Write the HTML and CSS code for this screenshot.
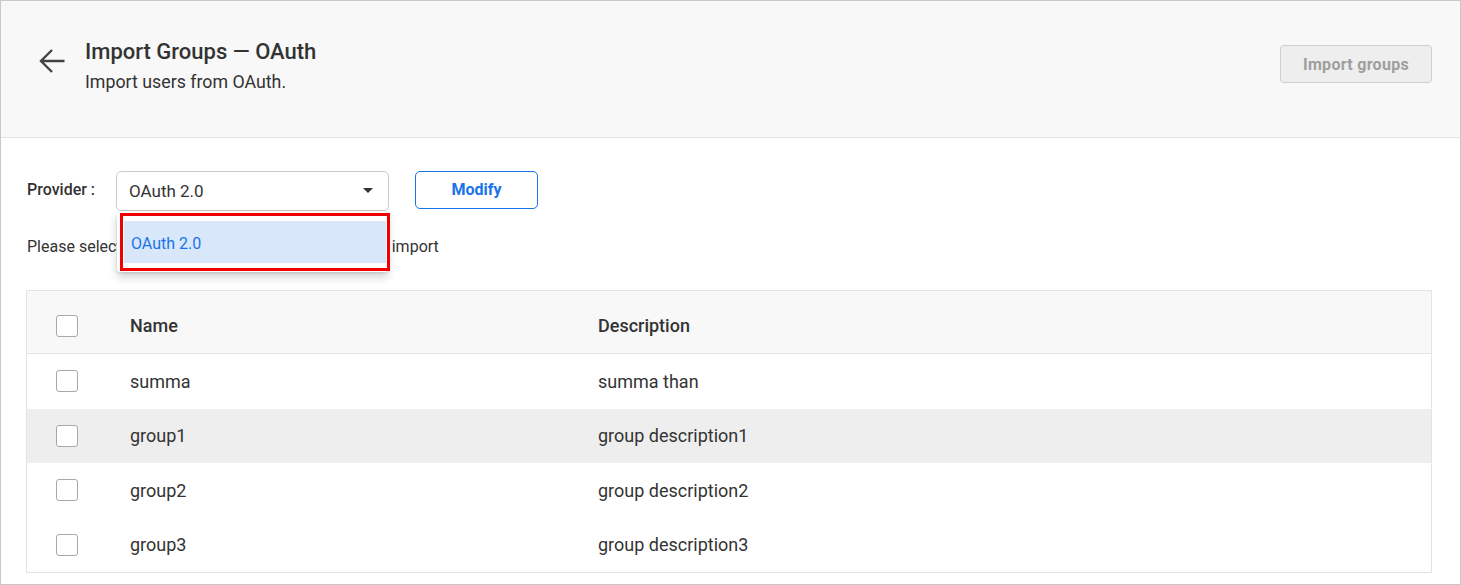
FILE: index.html
```html
<!DOCTYPE html>
<html>
<head>
<meta charset="utf-8">
<link rel="stylesheet" href="styles.css">
</head>
<body>
<div class="page">
  <header class="header">
    <div class="header-left">
      <button class="back" aria-label="Back">
        <svg width="27" height="26" viewBox="0 0 27 26"><path d="M1.5 13H25.5M13 2L2 13L13 24" fill="none" stroke="#444" stroke-width="2.4"/></svg>
      </button>
      <div class="titles">
        <h1 class="title">Import Groups — OAuth</h1>
        <p class="subtitle">Import users from OAuth.</p>
      </div>
    </div>
    <button class="btn-disabled">Import groups</button>
  </header>
  <main class="content">
    <div class="provider-row">
      <span class="provider-label">Provider :</span>
      <div class="select-wrap">
        <div class="select">
          <span>OAuth 2.0</span>
          <svg class="caret" width="10" height="5" viewBox="0 0 10 5"><path d="M0 0h10L5 5z" fill="#333"/></svg>
        </div>
        <div class="menu">
          <div class="menu-item">OAuth 2.0</div>
        </div>
        <div class="highlight"></div>
      </div>
      <button class="btn-outline">Modify</button>
    </div>
    <p class="hint">Please select the group from OAuth2.0 you want to import</p>
    <div class="table">
      <div class="tr th">
        <div class="c-check"><span class="cb"></span></div>
        <div class="c-name">Name</div>
        <div class="c-desc">Description</div>
      </div>
      <div class="tr">
        <div class="c-check"><span class="cb"></span></div>
        <div class="c-name">summa</div>
        <div class="c-desc">summa than</div>
      </div>
      <div class="tr hover">
        <div class="c-check"><span class="cb"></span></div>
        <div class="c-name">group1</div>
        <div class="c-desc">group description1</div>
      </div>
      <div class="tr">
        <div class="c-check"><span class="cb"></span></div>
        <div class="c-name">group2</div>
        <div class="c-desc">group description2</div>
      </div>
      <div class="tr">
        <div class="c-check"><span class="cb"></span></div>
        <div class="c-name">group3</div>
        <div class="c-desc">group description3</div>
      </div>
    </div>
  </main>
</div>
</body>
</html>
```
FILE: styles.css
```css
* { box-sizing: border-box; }
html, body { margin: 0; padding: 0; }
body {
  font-family: Roboto, "Liberation Sans", Arial, sans-serif;
  color: #333;
  background: #fff;
  overflow: hidden;
}
.page {
  width: 1461px;
  height: 585px;
  border: 1px solid #c8c8c8;
  overflow: hidden;
}
.header {
  height: 137px;
  background: #f8f8f8;
  border-bottom: 1px solid #e2e2e2;
  display: flex;
  justify-content: space-between;
  align-items: flex-start;
  padding: 38px 28px 0 38px;
}
.header-left {
  display: flex;
  align-items: flex-start;
}
.back {
  border: 0;
  background: none;
  padding: 0;
  margin-top: 9px;
  width: 27px;
  height: 26px;
  display: flex;
  cursor: pointer;
}
.titles { margin-left: 19px; }
.title {
  margin: 0;
  font-size: 22px;
  font-weight: 500;
  line-height: 26px;
  color: #333;
}
.subtitle {
  margin: 6px 0 0;
  font-size: 17.8px;
  line-height: 22px;
  color: #333;
}
.btn-disabled {
  margin-top: 6px;
  width: 152px;
  height: 38px;
  border: 1px solid #cfcfcf;
  border-radius: 4px;
  background: #eeeeee;
  color: #9e9e9e;
  font-family: inherit;
  font-size: 16px;
  font-weight: 700;
  letter-spacing: 0.3px;
}
.content { padding: 33px 28px 0 25px; }
.provider-row {
  display: flex;
  align-items: center;
}
.provider-label {
  font-size: 16px;
  font-weight: 500;
  width: 90px;
  margin-top: -3px;
  padding-left: 1px;
}
.select-wrap {
  position: relative;
  width: 273px;
}
.select {
  height: 40px;
  border: 1px solid #cccccc;
  border-radius: 5px;
  background: #fff;
  display: flex;
  align-items: center;
  justify-content: space-between;
  padding: 0 15px 0 12px;
  font-size: 17px;
  color: #333;
}
.caret { margin-top: -2px; }
.menu {
  position: absolute;
  top: 41px;
  left: 1px;
  width: 271px;
  height: 60px;
  background: #fff;
  border-radius: 3px;
  box-shadow: 0 5px 10px rgba(0,0,0,0.18), 0 1px 3px rgba(0,0,0,0.12);
  padding: 9px 2px 0 7px;
}
.menu-item {
  height: 42px;
  background: #d9e7fb;
  color: #1a73e8;
  font-size: 16px;
  display: flex;
  align-items: center;
  padding: 3px 0 0 7px;
}
.highlight {
  position: absolute;
  top: 42px;
  left: 4px;
  width: 270px;
  height: 58px;
  border: 3px solid #f00000;
}
.btn-outline {
  margin-left: 26px;
  width: 123px;
  height: 38px;
  border: 1px solid #1a73e8;
  border-radius: 5px;
  background: #fff;
  color: #1a73e8;
  font-family: inherit;
  font-size: 16px;
  font-weight: 700;
  margin-top: -3px;
}
.hint {
  margin: 26px 0 0 1px;
  font-size: 16px;
  line-height: 20px;
  color: #333;
}
.table {
  margin-top: 33px;
  border: 1px solid #e4e4e4;
  width: 1406px;
}
.tr {
  display: flex;
  align-items: center;
  height: 54.5px;
  font-size: 18px;
  color: #333;
}
.th {
  height: 63px;
  padding-top: 7px;
  background: #f8f8f8;
  border-bottom: 1px solid #e4e4e4;
  font-weight: 500;
}
.hover { background: #eeeeee; }
.c-check {
  width: 103px;
  padding-left: 29px;
  display: flex;
  align-items: center;
}
.cb {
  width: 22px;
  height: 22px;
  border: 1px solid #a8a8a8;
  border-radius: 3px;
  background: #fff;
}
.c-name { width: 468px; }
.c-desc { flex: 1; }
```
